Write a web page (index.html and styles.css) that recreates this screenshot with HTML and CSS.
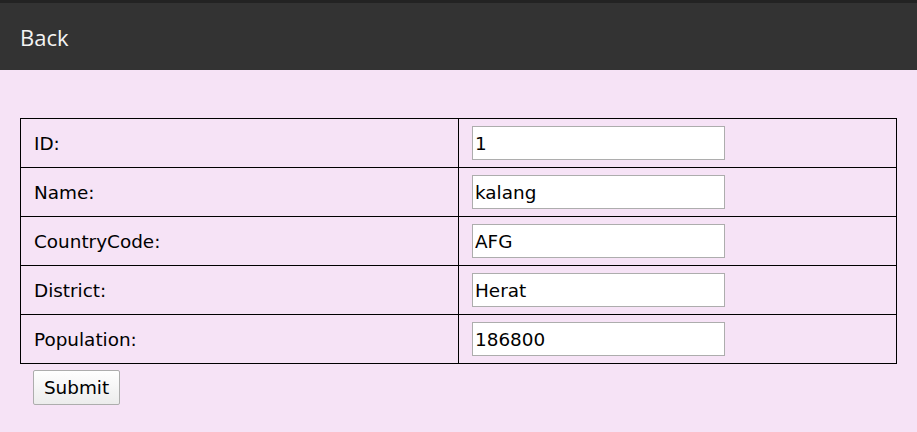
FILE: index.html
```html
<!DOCTYPE html>
<html>
<head>
<meta charset="utf-8">
<link rel="stylesheet" href="styles.css">
</head>
<body>
<header class="topbar"><a class="back" href="#">Back</a></header>
<main class="content">
<form class="city-form">
<table class="grid">
<tr><td class="label">ID:</td><td class="field"><input class="inp" type="text" value="1"></td></tr>
<tr><td class="label">Name:</td><td class="field"><input class="inp" type="text" value="kalang"></td></tr>
<tr><td class="label">CountryCode:</td><td class="field"><input class="inp" type="text" value="AFG"></td></tr>
<tr><td class="label">District:</td><td class="field"><input class="inp" type="text" value="Herat"></td></tr>
<tr><td class="label">Population:</td><td class="field"><input class="inp" type="text" value="186800"></td></tr>
</table>
<button class="submit" type="button">Submit</button>
</form>
</main>
</body>
</html>
```
FILE: styles.css
```css
html, body {
  margin: 0;
  padding: 0;
  background: #f6e3f6;
  font-family: "DejaVu Sans", Verdana, sans-serif;
}
.topbar {
  box-sizing: border-box;
  height: 70px;
  background: #333333;
  border-top: 3px solid #232323;
  display: flex;
  align-items: center;
  padding: 0 0 0 20px;
}
.back {
  font-family: "Open Sans", "Segoe UI", sans-serif;
  font-size: 22px;
  color: #f4f4f4;
  text-decoration: none;
}
.content {
  padding: 48px 20px 0 20px;
}
.grid {
  border-collapse: collapse;
  width: 877px;
}
.grid td {
  border: 1px solid #000;
  height: 49px;
  padding: 0;
  box-sizing: border-box;
  font-size: 18.4px;
  color: #000;
  vertical-align: middle;
}
.label {
  width: 438px;
  padding-left: 13px !important;
}
.field {
  padding-left: 13px !important;
}
.inp {
  display: block;
  box-sizing: border-box;
  width: 253px;
  height: 34px;
  border: 1px solid #adadad;
  background: #fff;
  font-family: "DejaVu Sans", Verdana, sans-serif;
  font-size: 18.4px;
  padding: 0 2px;
  margin: 0;
  color: #000;
}
.submit {
  display: block;
  margin: 6px 0 0 13px;
  box-sizing: border-box;
  width: 87px;
  height: 35px;
  border: 1px solid #adadad;
  border-radius: 2px;
  background: linear-gradient(#ffffff, #ececec);
  font-family: "DejaVu Sans", Verdana, sans-serif;
  font-size: 18.4px;
  color: #000;
  padding: 0;
}
```
